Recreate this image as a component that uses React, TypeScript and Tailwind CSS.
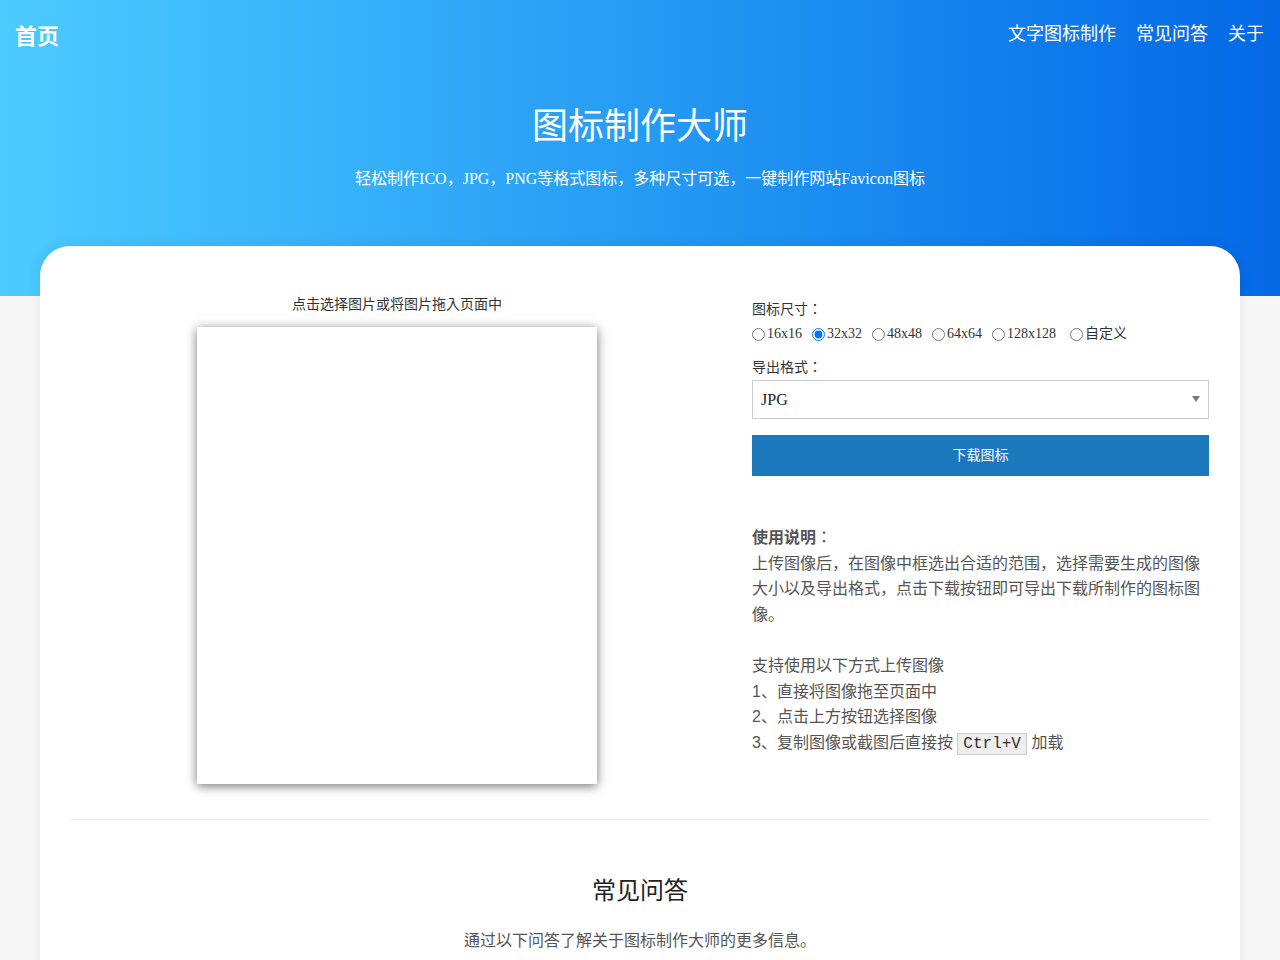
import { useState } from 'react';

const sizes = ['16x16', '32x32', '48x48', '64x64', '128x128'];

const serif = 'font-["Liberation_Serif","Noto_Sans_CJK_KR",serif]';
const sans = 'font-["Liberation_Sans","Noto_Sans_CJK_KR",sans-serif]';

export default function App() {
  const [size, setSize] = useState('32x32');
  const [format, setFormat] = useState('JPG');

  return (
    <div className={`min-h-screen bg-[#f7f7f7] ${serif} text-[#333]`}>
      {/* hero */}
      <header className="h-[296px] bg-gradient-to-r from-[#4ccbff] to-[#0568e6] text-white">
        <nav className="flex items-center justify-between h-[72px] pl-[15px] pr-[16px]">
          <a className={`text-[22px] font-bold ${sans}`}>首页</a>
          <div className={`flex gap-[20px] text-[18px] ${sans} -mt-[4px]`}>
            <a>文字图标制作</a>
            <a>常见问答</a>
            <a>关于</a>
          </div>
        </nav>
        <h1 className={`text-center text-[36px] leading-[50px] mt-[30px] ${sans}`}>图标制作大师</h1>
        <p className="text-center text-[16px] leading-[24px] mt-[15px]">
          轻松制作ICO，JPG，PNG等格式图标，多种尺寸可选，一键制作网站Favicon图标
        </p>
      </header>

      {/* main card */}
      <main className="mx-[40px] -mt-[50px] relative bg-white rounded-t-[30px] shadow-[0_0_14px_rgba(0,0,0,0.08)] px-[31px] pt-[49px] pb-[40px]">
        <div className="flex gap-[29px]">
          <div className="flex-1 flex flex-col items-center">
            <p className="text-[14px] leading-[20px]">点击选择图片或将图片拖入页面中</p>
            <div className="mt-[12px] w-[400px] h-[457px] bg-white shadow-[0_2px_10px_rgba(0,0,0,0.55)]" />
          </div>

          <div className="w-[457px]">
            <p className="mt-[5px] text-[14px] leading-[20px]">图标尺寸：</p>
            <div className="mt-[4px] flex items-center gap-[10px] text-[14px] leading-[20px]">
              {sizes.map((s) => (
                <label key={s} className="flex items-center gap-[2px]">
                  <input
                    type="radio"
                    name="size"
                    className="m-0 w-[13px] h-[13px]"
                    checked={size === s}
                    onChange={() => setSize(s)}
                  />
                  {s}
                </label>
              ))}
              <label className="flex items-center gap-[2px] ml-[4px]">
                <input
                  type="radio"
                  name="size"
                  className="m-0 w-[13px] h-[13px]"
                  checked={size === 'custom'}
                  onChange={() => setSize('custom')}
                />
                自定义
              </label>
            </div>

            <p className="mt-[14px] text-[14px] leading-[20px]">导出格式：</p>
            <div className="relative mt-[2px]">
              <select
                value={format}
                onChange={(e) => setFormat(e.target.value)}
                className="appearance-none w-full h-[39px] border border-[#ccc] bg-white px-[8px] text-[16px] text-[#222] outline-none"
              >
                <option>JPG</option>
                <option>PNG</option>
                <option>ICO</option>
              </select>
              <span className="pointer-events-none absolute right-[9px] top-[16px] w-0 h-0 border-l-[4px] border-r-[4px] border-t-[6px] border-l-transparent border-r-transparent border-t-[#777]" />
            </div>

            <button className={`mt-[16px] w-full h-[41px] bg-[#1b78ba] text-white text-[14px] ${sans}`}>下载图标</button>

            <div className={`mt-[49px] text-[16px] leading-[25.6px] text-[#555] ${sans}`}>
              <p>
                <b className="font-bold">使用说明</b>：
              </p>
              <p>上传图像后，在图像中框选出合适的范围，选择需要生成的图像大小以及导出格式，点击下载按钮即可导出下载所制作的图标图像。</p>
              <p className="mt-[25.6px]">支持使用以下方式上传图像</p>
              <p>1、直接将图像拖至页面中</p>
              <p>2、点击上方按钮选择图像</p>
              <p>
                3、复制图像或截图后直接按{' '}
                <kbd className='font-["Liberation_Mono",monospace] text-[#333] bg-[#eee] border border-[#ccc] px-[5px] py-[1px]'>Ctrl+V</kbd>{' '}
                加载
              </p>
            </div>
          </div>
        </div>

        <hr className="mt-[35px] border-0 border-t border-[#e6e6e6]" />

        <h2 className={`mt-[55px] text-center text-[24px] leading-[32px] text-[#222] ${sans}`}>常见问答</h2>
        <p className={`mt-[22px] text-center text-[16px] leading-[24px] text-[#555] ${sans}`}>
          通过以下问答了解关于图标制作大师的更多信息。
        </p>
      </main>
    </div>
  );
}
